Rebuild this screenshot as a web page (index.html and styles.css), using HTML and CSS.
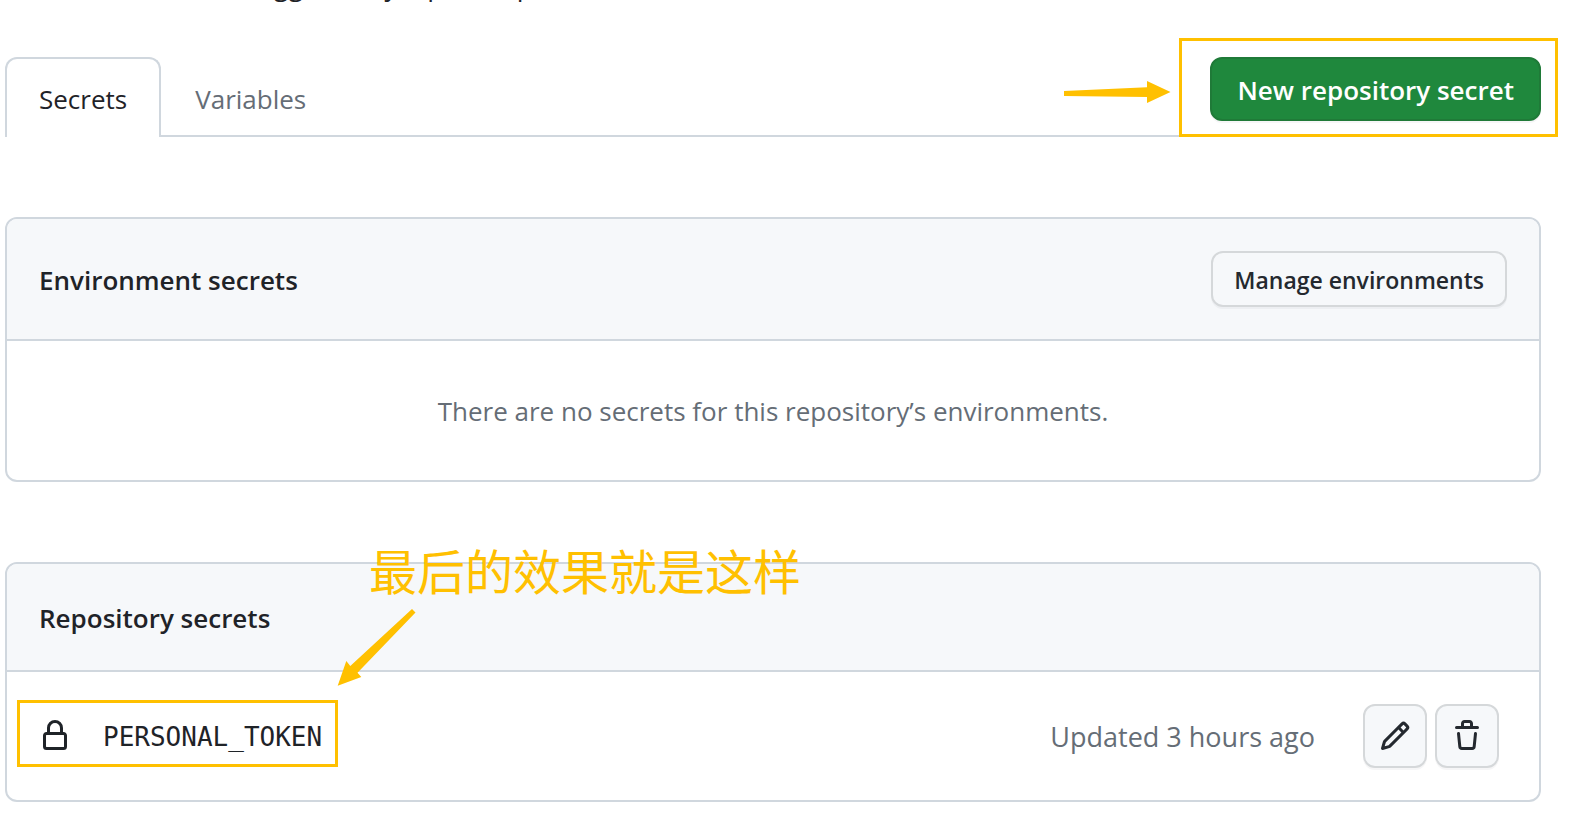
FILE: index.html
```html
<!DOCTYPE html>
<html lang="en">
<head>
<meta charset="utf-8">
<meta name="viewport" content="width=device-width, initial-scale=1">
<title>Actions secrets and variables</title>
<link rel="stylesheet" href="styles.css">
</head>
<body>
<main class="page">
  <p class="intro">workflows that are triggered by a pull request from a fork.</p>

  <div class="tab-bar">
    <nav class="tabs" aria-label="Secrets and variables">
      <a class="tab tab-current" href="#secrets" aria-current="page">Secrets</a>
      <a class="tab" href="#variables">Variables</a>
    </nav>
    <div class="tab-action">
      <button class="btn btn-primary" type="button">New repository secret</button>
      <span class="frame frame-action"></span>
      <svg class="arrow arrow-right" width="108" height="24" viewBox="0 0 108 24" aria-hidden="true"><path d="M1 11 84 7.300V1L107.500 12 84 23V17L1 16Z"/></svg>
    </div>
  </div>

  <section class="box" aria-labelledby="env-title">
    <header class="box-header">
      <h2 class="box-title" id="env-title">Environment secrets</h2>
      <button class="btn btn-small" type="button">Manage environments</button>
    </header>
    <p class="blank">There are no secrets for this repository’s environments.</p>
  </section>

  <section class="box" aria-labelledby="repo-title">
    <header class="box-header">
      <h2 class="box-title" id="repo-title">Repository secrets</h2>
    </header>
    <ul class="secrets">
      <li class="secret">
        <svg class="icon" viewBox="0 0 16 16" aria-hidden="true"><path d="M4 4a4 4 0 0 1 8 0v2h.25c.966 0 1.75.784 1.75 1.75v5.5A1.75 1.75 0 0 1 12.25 15h-8.500A1.75 1.75 0 0 1 2 13.250v-5.500C2 6.784 2.784 6 3.750 6H4Zm8.250 3.500h-8.500a.25.25 0 0 0-.25.25v5.500c0 .138.112.25.25.25h8.500a.25.25 0 0 0 .25-.25v-5.500a.25.25 0 0 0-.25-.25ZM10.500 6V4a2.500 2.500 0 1 0-5 0v2Z"/></svg>
        <code class="secret-name">PERSONAL_TOKEN</code>
        <span class="secret-updated">Updated 3 hours ago</span>
        <div class="secret-actions">
          <button class="btn btn-icon" type="button" aria-label="Edit PERSONAL_TOKEN">
            <svg class="icon" viewBox="0 0 16 16" aria-hidden="true"><path d="M11.013 1.427a1.75 1.75 0 0 1 2.474 0l1.086 1.086a1.75 1.75 0 0 1 0 2.474l-8.610 8.610c-.21.21-.47.364-.756.445l-3.251.93a.75.75 0 0 1-.927-.928l.929-3.250c.081-.286.235-.547.445-.758l8.610-8.610Zm.176 4.823L9.750 4.810l-6.286 6.287a.253.253 0 0 0-.064.108l-.558 1.953 1.953-.558a.253.253 0 0 0 .108-.064Zm1.238-3.763a.25.25 0 0 0-.354 0L10.811 3.750l1.439 1.440 1.263-1.263a.25.25 0 0 0 0-.354Z"/></svg>
          </button>
          <button class="btn btn-icon" type="button" aria-label="Delete PERSONAL_TOKEN">
            <svg class="icon" viewBox="0 0 16 16" aria-hidden="true"><path d="M11 1.750V3h2.250a.75.75 0 0 1 0 1.500H2.750a.75.75 0 0 1 0-1.500H5V1.750C5 .784 5.784 0 6.750 0h2.500C10.216 0 11 .784 11 1.750ZM4.496 6.675l.66 6.600a.25.25 0 0 0 .249.225h5.190a.25.25 0 0 0 .249-.225l.66-6.600a.75.75 0 0 1 1.492.149l-.66 6.600A1.748 1.748 0 0 1 10.595 15h-5.190a1.75 1.75 0 0 1-1.741-1.575l-.66-6.600a.75.75 0 1 1 1.492-.150ZM6.500 1.750V3h3V1.750a.25.25 0 0 0-.25-.25h-2.500a.25.25 0 0 0-.25.25Z"/></svg>
          </button>
        </div>
      </li>
    </ul>
    <span class="note" lang="zh-CN">最后的效果就是这样</span>
    <svg class="arrow arrow-down" width="80" height="78" viewBox="0 0 80 78" aria-hidden="true"><path d="M75 1 78.500 4.500 20.500 64.700 24.300 69 .700 77.700 9.300 53 13.300 58Z"/></svg>
    <span class="frame frame-token"></span>
  </section>
</main>
</body>
</html>
```
FILE: styles.css
```css
*,
*::before,
*::after {
  box-sizing: border-box;
}

body {
  margin: 0;
  overflow-x: hidden;
  background: #fff;
  color: #1f2328;
  font-family: "Segoe UI", "Open Sans", "Noto Sans", sans-serif;
  font-size: 26px;
  line-height: 42px;
}

.page {
  padding: 0 31px 12px 5px;
  overflow: hidden;
}

.intro {
  margin: -36px 0 51px;
  font-size: 27px;
}

.tab-bar {
  display: flex;
  justify-content: space-between;
  align-items: flex-start;
  margin-bottom: 80px;
  border-bottom: 2px solid #d0d7de;
}

.tabs {
  display: flex;
  margin-bottom: -2px;
}

.tab {
  padding: 19px 32px 17px;
  border: 2px solid transparent;
  border-bottom: 0;
  border-radius: 12px 12px 0 0;
  color: #656d76;
  text-decoration: none;
}

.tab-current {
  border-color: #d0d7de;
  background: #fff;
  color: #1f2328;
}

.tab-action {
  position: relative;
}

.btn {
  display: inline-flex;
  align-items: center;
  justify-content: center;
  border: 2px solid #d5d8da;
  border-radius: 12px;
  background: #f6f8fa;
  box-shadow: 0 2px 0 rgba(31, 35, 40, 0.04);
  color: #24292f;
  font-family: inherit;
  font-weight: 600;
  cursor: pointer;
}

.btn-primary {
  height: 64px;
  padding: 2px 25px 0;
  border-color: #1f7a38;
  background: #1f883d;
  color: #fff;
  font-size: 26px;
}

.btn-small {
  height: 56px;
  padding: 2px 21px 0;
  font-size: 23px;
}

.btn-icon {
  width: 64px;
  height: 64px;
  padding: 0;
}

.icon {
  flex: none;
  width: 32px;
  height: 32px;
  fill: currentColor;
}

.box {
  position: relative;
  margin-bottom: 80px;
  border: 2px solid #d0d7de;
  border-radius: 12px;
}

.box:last-child {
  margin-bottom: 0;
}

.box-header {
  display: flex;
  align-items: center;
  justify-content: space-between;
  padding: 32px;
  border-bottom: 2px solid #d0d7de;
  border-radius: 10px 10px 0 0;
  background: #f6f8fa;
}

.box-title {
  margin: 0;
  padding-top: 2px;
  font-size: 26px;
  font-weight: 600;
  line-height: 40px;
}

.blank {
  margin: 0;
  padding: 49px 32px 48px;
  color: #656d76;
  text-align: center;
}

.secrets {
  margin: 0;
  padding: 0;
  list-style: none;
}

.secret {
  display: flex;
  align-items: center;
  padding: 32px 40px 32px 32px;
}

.secret-name {
  margin-left: 32px;
  padding-top: 2px;
  font-family: "DejaVu Sans Mono", monospace;
  font-size: 26px;
}

.secret-updated {
  margin-left: auto;
  padding-top: 2px;
  color: #656d76;
  font-size: 27px;
}

.secret-actions {
  display: flex;
  gap: 8px;
  margin-left: 48px;
}

.frame {
  position: absolute;
  border: 3px solid #ffc000;
  pointer-events: none;
}

.frame-action {
  top: -19px;
  right: -17px;
  bottom: -16px;
  left: -31px;
}

.frame-token {
  top: 136px;
  left: 10px;
  width: 321px;
  height: 67px;
}

.arrow {
  position: absolute;
  fill: #ffc000;
}

.arrow-right {
  top: 23px;
  right: 370px;
}

.arrow-down {
  top: 44px;
  left: 330px;
}

.note {
  position: absolute;
  top: -27px;
  left: 362px;
  color: #ffc000;
  font-family: "Noto Sans CJK SC", sans-serif;
  font-size: 48px;
  line-height: 64px;
  white-space: nowrap;
}
```
